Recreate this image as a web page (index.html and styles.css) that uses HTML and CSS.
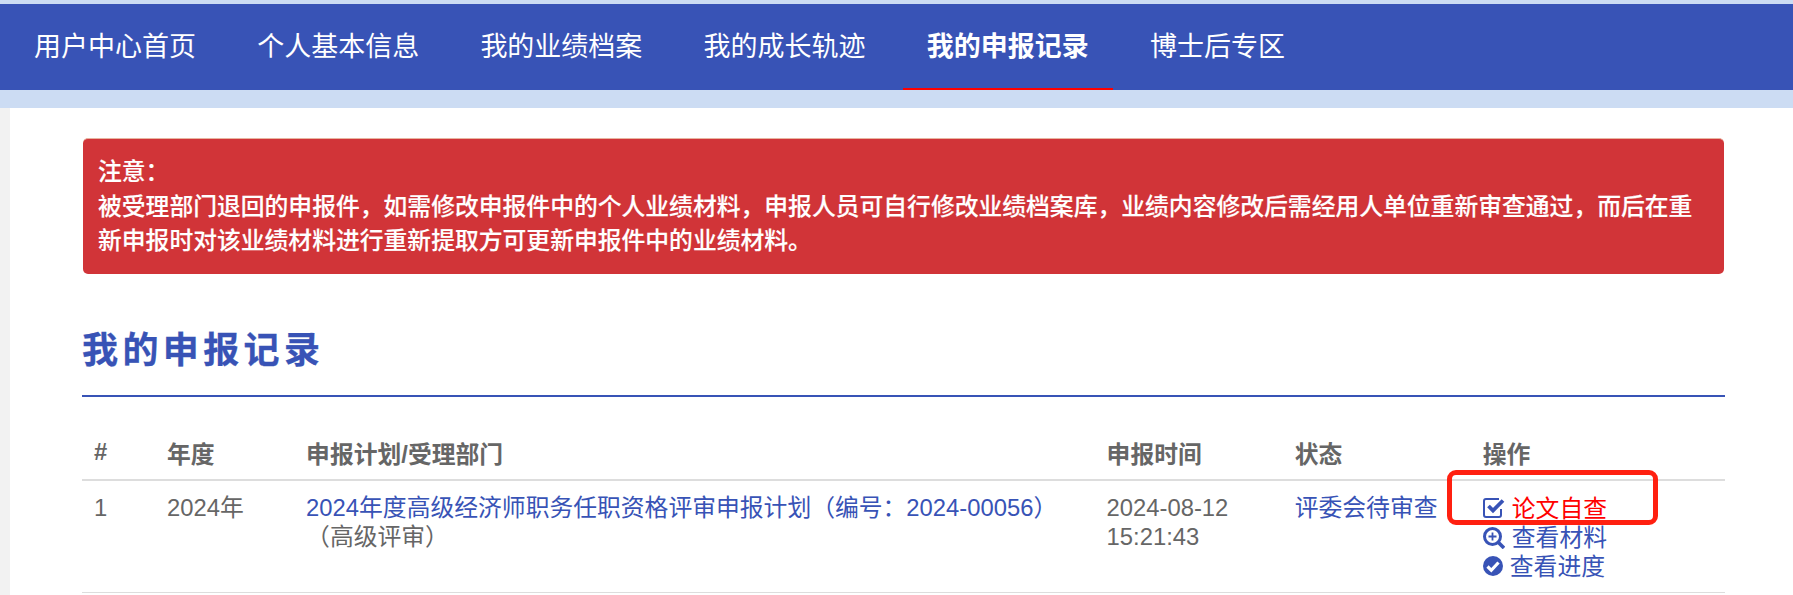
FILE: index.html
```html
<!DOCTYPE html>
<html lang="zh-CN">
<head>
<meta charset="utf-8">
<title>我的申报记录</title>
<link rel="stylesheet" href="styles.css">
</head>
<body>
<header class="topband">
  <nav class="nav">
    <a class="nav-item">用户中心首页</a>
    <a class="nav-item">个人基本信息</a>
    <a class="nav-item">我的业绩档案</a>
    <a class="nav-item">我的成长轨迹</a>
    <a class="nav-item active">我的申报记录</a>
    <a class="nav-item">博士后专区</a>
  </nav>
</header>
<div class="page">
  <main class="content">
    <div class="alert">注意：<br>被受理部门退回的申报件，如需修改申报件中的个人业绩材料，申报人员可自行修改业绩档案库，业绩内容修改后需经用人单位重新审查通过，而后在重新申报时对该业绩材料进行重新提取方可更新申报件中的业绩材料。</div>
    <h1 class="title">我的申报记录</h1>
    <table class="records">
      <colgroup>
        <col class="c-no"><col class="c-year"><col class="c-plan"><col class="c-time"><col class="c-status"><col class="c-op">
      </colgroup>
      <thead>
        <tr><th>#</th><th>年度</th><th>申报计划/受理部门</th><th>申报时间</th><th>状态</th><th>操作</th></tr>
      </thead>
      <tbody>
        <tr>
          <td>1</td>
          <td>2024年</td>
          <td><a class="link">2024年度高级经济师职务任职资格评审申报计划（编号：2024-00056）</a><br>（高级评审）</td>
          <td>2024-08-12<br>15:21:43</td>
          <td><a class="link">评委会待审查</a></td>
          <td>
            <div class="ops">
              <a class="op red"><svg class="ico" viewBox="0 0 22 22"><path d="M18 11v6a2 2 0 0 1-2 2H3a2 2 0 0 1-2-2V3a2 2 0 0 1 2-2h13" fill="none" stroke="#3853b6" stroke-width="2"/><path d="M5.500 8l4.500 4.500L20 2.500" fill="none" stroke="#3853b6" stroke-width="3.800"/></svg>论文自查</a>
              <a class="op"><svg class="ico" viewBox="0 0 22 22"><circle cx="9.500" cy="9.500" r="8" fill="none" stroke="#3853b6" stroke-width="3"/><path d="M15 15l6 6" fill="none" stroke="#3853b6" stroke-width="3.600"/><path d="M5.500 9.500h8M9.500 5.500v8" fill="none" stroke="#3853b6" stroke-width="1.800"/></svg>查看材料</a>
              <a class="op"><svg class="ico ico-round" viewBox="0 0 20 20"><circle cx="10" cy="10" r="10" fill="#3853b6"/><path d="M4.500 10.500l3.800 3.800 7.200-7.800" fill="none" stroke="#fff" stroke-width="3.200"/></svg>查看进度</a>
            </div>
          </td>
        </tr>
      </tbody>
    </table>
  </main>
  <div class="mark"></div>
</div>
</body>
</html>
```

FILE: styles.css
```css
* { box-sizing: border-box; }
html, body { margin: 0; height: 100%; overflow: hidden; }
body {
  background: #f2f2f2;
  font-family: "Liberation Sans", "Noto Sans CJK SC", sans-serif;
  color: #666;
}
.topband {
  background: #ccdcf3;
  padding: 4px 0 18px;
}
.nav {
  display: flex;
  gap: 13.200px;
  height: 86px;
  padding-left: 10px;
  background: #3853b6;
}
.nav-item {
  display: flex;
  align-items: center;
  padding: 2px 24px 0;
  border-bottom: 2px solid transparent;
  color: #fff;
  font-size: 27px;
  line-height: 1;
}
.nav-item.active {
  font-weight: 700;
  border-bottom-color: #f00;
}
.page {
  position: relative;
  margin-left: 10px;
  height: 487px;
  background: #fff;
}
.content { padding: 30px 68px 0 72px; }
.alert {
  height: 136px;
  margin: 0 1px;
  padding: 16px 15px 0;
  border-top: 1px solid #e8b4a0;
  border-radius: 5px;
  background: #d13438;
  color: #fff;
  font-size: 23.800px;
  font-weight: 500;
  line-height: 34.500px;
  -webkit-text-stroke: 0.150px #fff;
}
.title {
  margin: 0;
  padding: 54px 0 0;
  height: 123px;
  border-bottom: 2px solid #3853b6;
  color: #3853b6;
  font-size: 36px;
  line-height: 45px;
  font-weight: 700;
  letter-spacing: 4.400px;
  -webkit-text-stroke: 0.300px #3853b6;
}
.records {
  width: 100%;
  margin-top: 26px;
  border-collapse: collapse;
  table-layout: fixed;
  font-size: 23.800px;
}
.c-no { width: 74px; }
.c-year { width: 139px; }
.c-plan { width: 800px; }
.c-time { width: 188px; }
.c-status { width: 188px; }
.c-op { width: 253px; }
.records th {
  height: 57px;
  padding: 2px 11px 0;
  text-align: left;
  font-weight: 700;
  border-bottom: 2px solid #ddd;
}
.records td {
  padding: 12px 11px 11px;
  vertical-align: top;
  line-height: 29px;
  border-bottom: 1px solid #ddd;
}
.records th:first-child, .records td:first-child { padding-left: 12px; }
.link { color: #3853b6; }
.ops { display: flex; flex-direction: column; padding-top: 1px; }
.op { display: flex; align-items: center; gap: 7px; color: #3853b6; height: 29px; }
.op.red { color: #f00; }
.ico { width: 22px; height: 22px; flex: none; }
.ico-round { width: 20px; height: 20px; margin-bottom: 2px; }
.mark {
  position: absolute;
  left: 1437px;
  top: 362px;
  width: 211px;
  height: 55px;
  border: 5px solid #ff2010;
  border-radius: 9px;
}
```
